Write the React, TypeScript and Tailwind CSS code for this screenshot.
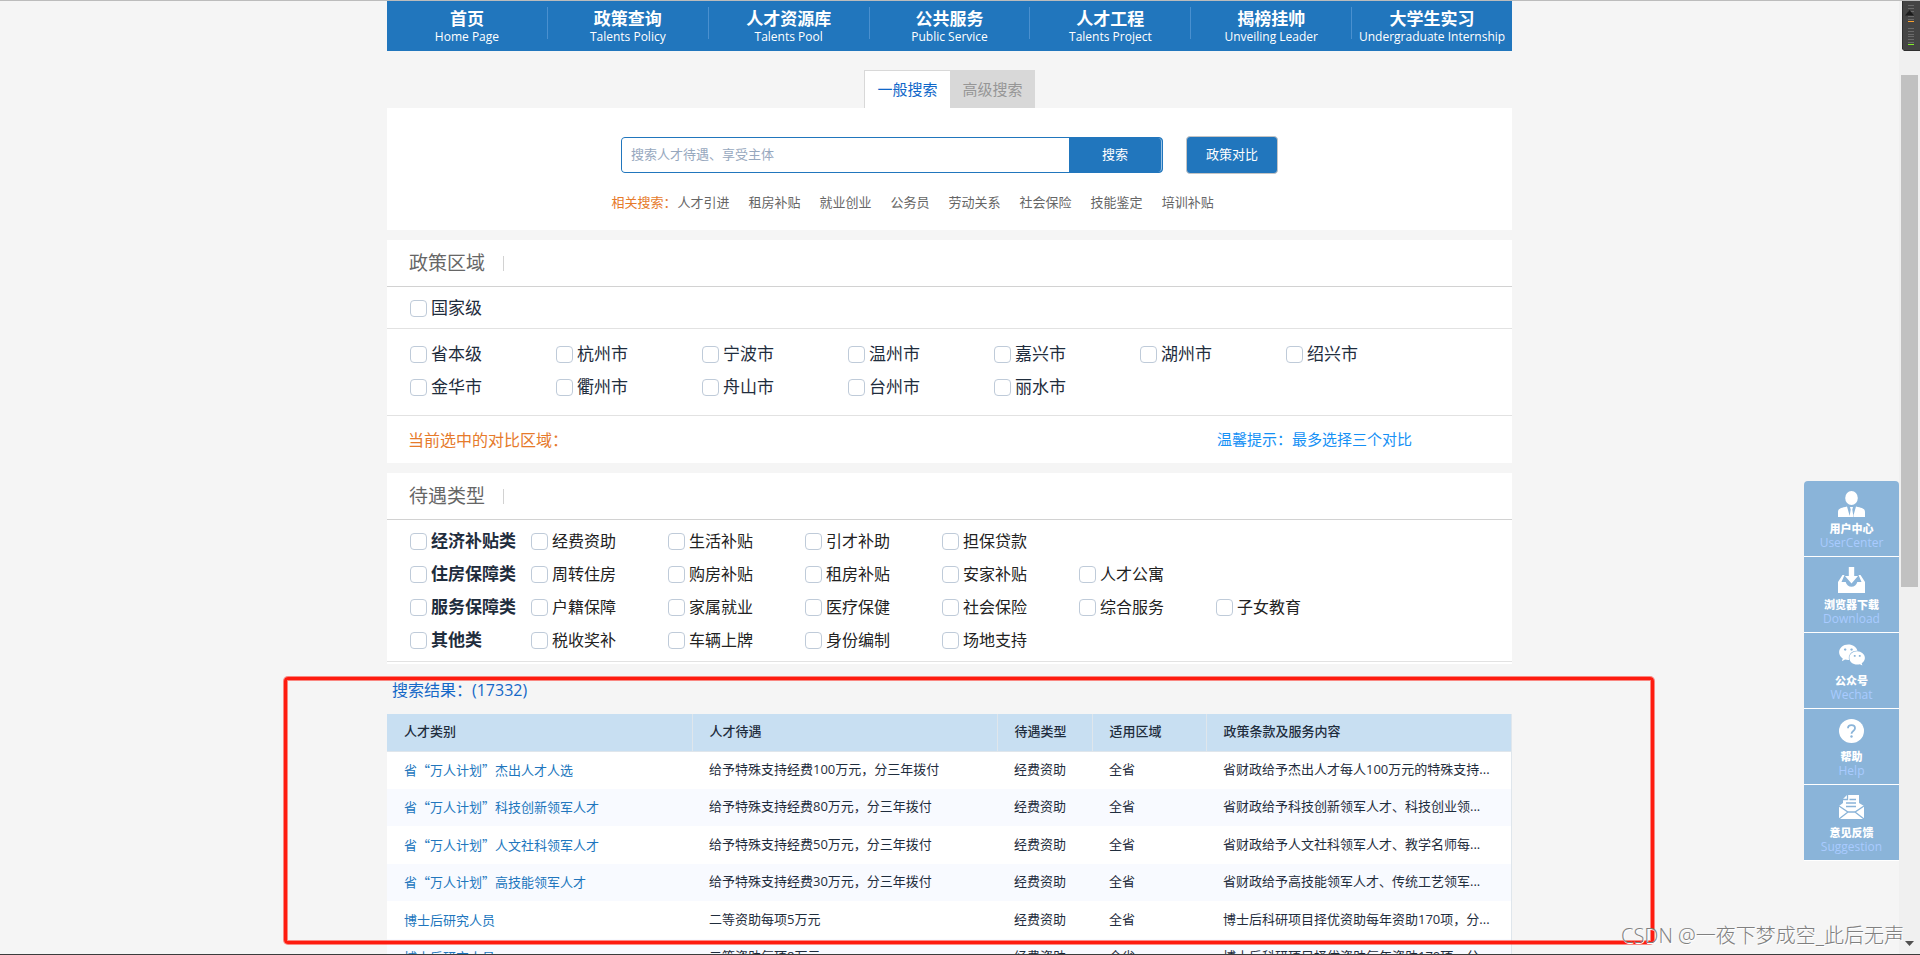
import type { ReactNode } from 'react';
import { FaWeixin } from 'react-icons/fa';

const NAV_ITEMS = [
  { title: '首页', sub: 'Home Page' },
  { title: '政策查询', sub: 'Talents Policy' },
  { title: '人才资源库', sub: 'Talents Pool' },
  { title: '公共服务', sub: 'Public Service' },
  { title: '人才工程', sub: 'Talents Project' },
  { title: '揭榜挂帅', sub: 'Unveiling Leader' },
  { title: '大学生实习', sub: 'Undergraduate Internship' },
];

const RELATED = ['人才引进', '租房补贴', '就业创业', '公务员', '劳动关系', '社会保险', '技能鉴定', '培训补贴'];

const CITIES = [
  '省本级', '杭州市', '宁波市', '温州市', '嘉兴市', '湖州市', '绍兴市',
  '金华市', '衢州市', '舟山市', '台州市', '丽水市',
];

const TREATMENTS = [
  { name: '经济补贴类', items: ['经费资助', '生活补贴', '引才补助', '担保贷款'] },
  { name: '住房保障类', items: ['周转住房', '购房补贴', '租房补贴', '安家补贴', '人才公寓'] },
  { name: '服务保障类', items: ['户籍保障', '家属就业', '医疗保健', '社会保险', '综合服务', '子女教育'] },
  { name: '其他类', items: ['税收奖补', '车辆上牌', '身份编制', '场地支持'] },
];

const RESULTS = [
  ['省“万人计划”杰出人才人选', '给予特殊支持经费100万元，分三年拨付', '省财政给予杰出人才每人100万元的特殊支持...'],
  ['省“万人计划”科技创新领军人才', '给予特殊支持经费80万元，分三年拨付', '省财政给予科技创新领军人才、科技创业领...'],
  ['省“万人计划”人文社科领军人才', '给予特殊支持经费50万元，分三年拨付', '省财政给予人文社科领军人才、教学名师每...'],
  ['省“万人计划”高技能领军人才', '给予特殊支持经费30万元，分三年拨付', '省财政给予高技能领军人才、传统工艺领军...'],
  ['博士后研究人员', '二等资助每项5万元', '博士后科研项目择优资助每年资助170项，分...'],
  ['博士后研究人员', '二等资助每项8万元', '博士后科研项目择优资助每年资助170项，分...'],
];

export default function App() {
  return (
    <div
      lang="zh-CN"
      className="relative flex h-screen overflow-hidden border-t border-b border-t-[#bcbcbc] border-b-[#3c3c3c] bg-[#f5f5f5] font-['Open_Sans','Noto_Sans_CJK_SC',sans-serif] text-[#1f2d3d]"
    >
      <div className="min-w-0 flex-1">
        <main className="mx-auto w-full max-w-[1125px]">
          <NavBar />
          <SearchPanel />
          <RegionPanel />
          <TreatmentPanel />
          <Results />
        </main>
      </div>
      <Scrollbar />
      <SideMenu />
      <p className="absolute right-4 bottom-1 text-xl leading-7 font-light whitespace-nowrap text-[#808080] [text-shadow:1px_1px_0_#fff]">
        CSDN @一夜下梦成空_此后无声
      </p>
    </div>
  );
}

function NavBar() {
  return (
    <nav className="h-[50px] bg-[#2176bd] text-center text-white">
      <ul className="flex">
        {NAV_ITEMS.map((item) => (
          <li key={item.title} className="mt-1.5 h-8 flex-1 border-r border-[#4a90cf] pt-0.5 last:border-r-0">
            <a href="#" className="block whitespace-nowrap">
              <span className="block text-[17px] leading-5 font-bold">{item.title}</span>
              <span className="block text-[12px] leading-4">{item.sub}</span>
            </a>
          </li>
        ))}
      </ul>
    </nav>
  );
}

function SearchPanel() {
  return (
    <section>
      <div className="mt-[19px] flex justify-center text-[15px]">
        <button type="button" className="h-[38px] w-[86px] border-t border-l border-[#d8d8d8] bg-white text-[#0f67c9]">
          一般搜索
        </button>
        <button type="button" className="h-[38px] w-[85px] bg-[#d8d8d8] text-[#969696]">
          高级搜索
        </button>
      </div>
      <div className="bg-white py-7 pb-[18px] text-[13px]">
        <div className="flex items-center justify-center gap-[23px]">
          <form className="flex h-9 w-[542px] overflow-hidden rounded border border-[#2176bd] bg-[#2176bd]">
            <input
              type="text"
              aria-label="搜索"
              placeholder="搜索人才待遇、享受主体"
              className="min-w-0 flex-1 bg-white px-[9px] outline-none placeholder:text-[#97a8be]"
            />
            <button type="button" className="w-[93px] rounded-r border-r border-[#9cc3e4] text-white">
              搜索
            </button>
          </form>
          <button type="button" className="h-[38px] w-[92px] rounded border border-[#c4c4c4] bg-[#2176bd] text-white">
            政策对比
          </button>
        </div>
        <div className="mx-auto mt-[18px] flex w-[676px] gap-px leading-5 text-[#666]">
          <span className="text-[#e67a2b]">相关搜索：</span>
          <div className="flex gap-[19px]">
            {RELATED.map((word) => (
              <a key={word} href="#">{word}</a>
            ))}
          </div>
        </div>
      </div>
    </section>
  );
}

function PanelTitle({ children }: { children: ReactNode }) {
  return (
    <header className="flex h-[47px] items-center border-b border-[#d2d2d2] pl-[22px] text-[#666]">
      <h2 className="text-[19px]">{children}</h2>
      <span className="ml-[18px] h-[15px] w-px bg-[#d2d2d2]" />
    </header>
  );
}

function Check({ name, className }: { name: string; className: string }) {
  return (
    <label className={`flex h-[33px] items-center gap-1 whitespace-nowrap ${className}`}>
      <input type="checkbox" className="mt-0.5 size-[17px] shrink-0 appearance-none rounded border border-[#bfcbd9] bg-white" />
      {name}
    </label>
  );
}

function RegionPanel() {
  return (
    <section className="mt-2.5 bg-white">
      <PanelTitle>政策区域</PanelTitle>
      <div className="flex h-[42px] items-center border-b border-[#e2e2e2] pl-[23px]">
        <Check name="国家级" className="text-[17px]" />
      </div>
      <div className="flex flex-wrap border-b border-[#e2e2e2] pt-2 pb-3 pl-[23px]">
        {CITIES.map((city) => (
          <Check key={city} name={city} className="w-[146px] text-[17px]" />
        ))}
      </div>
      <div className="flex h-[47px] items-center justify-between pr-[100px] pl-[21px]">
        <span className="text-base text-[#e67a2b]">当前选中的对比区域：</span>
        <span className="text-[15px] text-[#1590f5]">温馨提示：最多选择三个对比</span>
      </div>
    </section>
  );
}

function TreatmentPanel() {
  return (
    <section className="mt-2.5 bg-white pb-0.5">
      <PanelTitle>待遇类型</PanelTitle>
      <div className="border-b border-[#e2e2e2] pt-1 pb-[5px] pl-[23px]">
        {TREATMENTS.map((group) => (
          <div key={group.name} className="flex">
            <Check name={group.name} className="w-[121px] text-[17px] font-bold" />
            {group.items.map((item) => (
              <Check key={item} name={item} className="w-[137px] text-base text-[#222]" />
            ))}
          </div>
        ))}
      </div>
    </section>
  );
}

function Results() {
  return (
    <section className="relative">
      <h2 className="pt-3.5 pb-3 pl-[5px] text-base leading-6 text-[#1568c7]">搜索结果：(17332)</h2>
      <table className="w-full table-fixed border-r border-[#dfe6ec] bg-white text-left text-[13px] whitespace-nowrap">
        <thead className="bg-[#c8dff2]">
          <tr className="h-[37px] border-b border-[#dfe6ec] [&>th]:border-r [&>th]:border-[#dfe6ec] [&>th]:pb-px [&>th]:pl-[17px] [&>th]:font-medium">
            <th className="w-[305px]">人才类别</th>
            <th className="w-[305px]">人才待遇</th>
            <th className="w-[95px]">待遇类型</th>
            <th className="w-[114px]">适用区域</th>
            <th>政策条款及服务内容</th>
          </tr>
        </thead>
        <tbody>
          {RESULTS.map(([category, treatment, terms], i) => (
            <tr key={i} className="odd:h-[38px] even:h-[37px] even:bg-[#f8faff] [&>td]:pb-px [&>td]:pl-[17px]">
              <td className="font-['Noto_Sans_CJK_SC',sans-serif] text-[#2176bd]"><a href="#">{category}</a></td>
              <td>{treatment}</td>
              <td>经费资助</td>
              <td>全省</td>
              <td>{terms}</td>
            </tr>
          ))}
        </tbody>
      </table>
      {/* highlight frame around the result list */}
      <div className="pointer-events-none absolute top-[13px] -right-[142px] -left-[103px] h-[267px] rounded border-[3px] border-[#fe1b0f] ring-1 ring-[#fe1b0f]/50 inset-ring inset-ring-[#fe1b0f]/50" />
    </section>
  );
}

function SideMenu() {
  return (
    <aside className="absolute top-[480px] right-[21px] w-[95px] overflow-hidden rounded-t">
      <SideItem
        title="用户中心"
        sub="UserCenter"
        icon={
          <svg viewBox="0 0 27 27" className="size-[27px] fill-white">
            <ellipse cx="13.5" cy="7" rx="6.3" ry="7" />
            <path d="M9 15.5 12 26H0v-5c0-3 2-4 9-5.500zM18 15.500 15 26h12v-5c0-3-2-4-9-5.500zM12 16h3l-.7 2.500L15.500 26h-4l1.200-7.500z" />
          </svg>
        }
      />
      <SideItem
        title="浏览器下载"
        sub="Download"
        icon={
          <svg viewBox="0 0 27 27" className="size-[27px] fill-white">
            <path d="M10.800 0h5.400v9H20l-6.500 7.500L7 9h3.800z" />
            <path d="M4.500 8h2L3.500 15h4.200c.8 3 3 4.800 5.800 4.800s5-1.800 5.800-4.800h4.200L20.500 8h2L27 15v11H0V15z" />
          </svg>
        }
      />
      <SideItem title="公众号" sub="Wechat" icon={<FaWeixin className="h-6 w-[30px]" />} />
      <SideItem
        title="帮助"
        sub="Help"
        icon={
          <svg viewBox="0 0 27 27" className="size-[27px]">
            <ellipse cx="13.500" cy="12" rx="12.500" ry="12" fill="#fff" />
            <path d="M10 9.300c0-4.300 7-4.300 7 0 0 2.700-3.500 2.700-3.500 5.400" fill="none" stroke="#8ab4d9" strokeWidth="1.800" />
            <circle cx="13.500" cy="17.500" r="1.200" fill="#8ab4d9" />
          </svg>
        }
      />
      <SideItem
        title="意见反馈"
        sub="Suggestion"
        icon={
          <svg viewBox="0 0 27 27" className="size-[27px]">
            <path d="M9 0h12v8l5 3v13H1V11l4-3V4z" fill="#fff" />
            <path d="M5 4.500h4.500V0M11.500 4.500H18M8 8h10M8 11.500h10M1 11l9 6h7l9-6M10 17l-9 7M17 17l9 7" fill="none" stroke="#8ab4d9" strokeWidth="1.300" />
          </svg>
        }
      />
    </aside>
  );
}

function SideItem({ icon, title, sub }: { icon: ReactNode; title: string; sub: string }) {
  return (
    <a href="#" className="flex h-[76px] flex-col items-center border-b border-white bg-[#8ab4d9] pt-2.5 text-white">
      <span className="flex h-[31px] items-start">{icon}</span>
      <span className="text-[11px] leading-[13px] font-black">{title}</span>
      <span className="text-[12px] leading-[15px] text-[#a9cbff]">{sub}</span>
    </a>
  );
}

function Scrollbar() {
  return (
    <div className="relative flex w-[21px] flex-col items-center bg-[#f0f0f0] pt-[74px]">
      <div className="h-[512px] w-[17px] bg-[#c1c1c1]" />
      <svg viewBox="0 0 9 5" className="mt-auto mr-px mb-2 h-[5px] w-[9px] fill-[#505050]">
        <path d="M0 0h9L4.500 5z" />
      </svg>
      <svg viewBox="0 0 18 50" className="absolute top-0 right-0 h-[50px] w-[18px]">
        <path d="M0 0h18v50H2L0 48z" fill="#2e2e2e" />
        <path d="M1 0h17v49H1z" fill="#444" />
        <path d="M6 4.500h6M6 7.500h6M6 10.500h6M6 15.500h6M6 18.500h6M6 27.500h6M6 30.500h6M6 33.500h6M6 35.500h6M6 38.500h6M6 41.500h6" stroke="#6a6a6a" />
        <path d="M6 20.500h6" stroke="#f9a12e" />
        <path d="M6 43.500h6" stroke="#83ee2b" />
        <path d="M3 14.500 7.500 9l4.500 5.500z" fill="#1b1b1b" />
      </svg>
    </div>
  );
}
